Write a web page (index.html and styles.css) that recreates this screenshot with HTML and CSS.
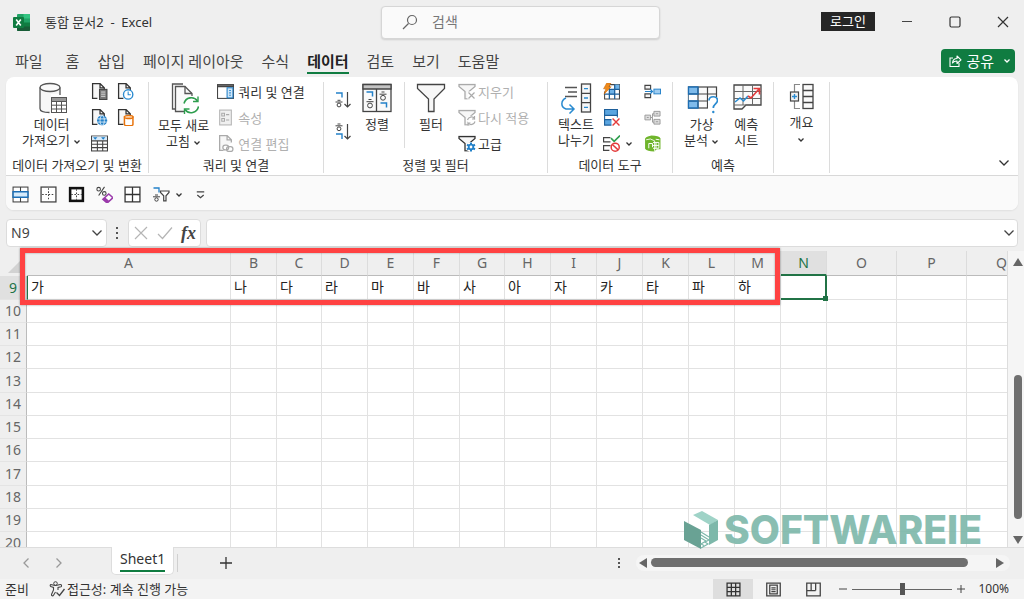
FILE: index.html
```html
<!DOCTYPE html>
<html lang="ko">
<head>
<meta charset="utf-8">
<title>통합 문서2 - Excel</title>
<meta name="viewport" content="width=device-width, initial-scale=1">
<link rel="stylesheet" href="styles.css">
</head>
<body>
<svg class="defs" aria-hidden="true">
  <symbol id="chev" viewBox="0 0 8 6"><path d="M1.500 1.500L4 4l2.500-2.500" fill="none" stroke="currentColor" stroke-width="1.300"/></symbol>
  <symbol id="chev-lg" viewBox="0 0 12 8"><path d="M1.500 1.500L6 6l4.500-4.500" fill="none" stroke="currentColor" stroke-width="1.300"/></symbol>
  <symbol id="page" viewBox="0 0 16 16"><path d="M6 14.500H1.500v-14h7l4 4V7M8.500.5v4h4" fill="#f7f7f7" stroke="currentColor" stroke-width="1.200"/></symbol>
  <symbol id="funnel-sm" viewBox="0 0 18 16"><path d="M1 1h16v2l-6 5v7.500H7V8L1 3z" fill="#f7f7f7" stroke="currentColor" stroke-width="1.300"/></symbol>
</svg>

<header class="titlebar">
  <div class="doc">
    <svg class="app-icon" viewBox="0 0 17 17"><rect x="4" y="0" width="13" height="17" rx="1" fill="#21a366"/><path d="M10.500 0H16a1 1 0 0 1 1 1v3.500h-6.500z" fill="#33c481"/><path d="M4 8.500h6.500V13H4zM10.500 8.500H17V13h-6.500z" fill="#107c41"/><path d="M4 12.500h13V16a1 1 0 0 1-1 1H5a1 1 0 0 1-1-1z" fill="#185c37"/><rect x="0" y="3" width="11" height="11" rx="1" fill="#107c41"/><path d="M3.200 5.500l4.600 6M7.800 5.500l-4.600 6" stroke="#fff" stroke-width="1.600"/></svg>
    <h1 class="doc-title">통합 문서2&nbsp; -&nbsp; Excel</h1>
  </div>
  <label class="search">
    <svg viewBox="0 0 16 16" width="16" height="16"><circle cx="10" cy="6" r="4.500" fill="none" stroke="#666" stroke-width="1.200"/><path d="M6.500 9.500L1 15" stroke="#666" stroke-width="1.300"/></svg>
    <input type="search" placeholder="검색" aria-label="검색">
  </label>
  <div class="window-tools">
    <button class="login">로그인</button>
    <div class="window-buttons">
      <button aria-label="최소화"><svg viewBox="0 0 12 12"><path d="M1 5.500h10" stroke="#444"/></svg></button>
      <button aria-label="최대화"><svg viewBox="0 0 12 12"><rect x="1" y="1" width="10" height="10" rx="1.500" fill="none" stroke="#333" stroke-width="1.200"/></svg></button>
      <button aria-label="닫기"><svg viewBox="0 0 12 12"><path d="M1 1l10 10M11 1L1 11" stroke="#333" stroke-width="1.200"/></svg></button>
    </div>
  </div>
</header>

<nav class="tabs">
  <a href="#" class="file">파일</a><a href="#">홈</a><a href="#">삽입</a><a href="#">페이지 레이아웃</a><a href="#">수식</a><a href="#" class="active">데이터</a><a href="#">검토</a><a href="#">보기</a><a href="#">도움말</a>
  <button class="share">
    <svg viewBox="0 0 14 14" width="14" height="14"><path d="M5 4H2v8.500h9V9" fill="none" stroke="#fff" stroke-width="1.100"/><path d="M4.500 9c.3-3 2-4.500 4.500-4.500V2l4 3.800L9 9.500V7C7 7 5.500 7.500 4.500 9z" fill="none" stroke="#fff" stroke-width="1.100" stroke-linejoin="round"/></svg>
    <span>공유</span>
    <svg class="chev" viewBox="0 0 8 6"><use href="#chev"/></svg>
  </button>
</nav>

<section class="ribbon">
  <div class="groups">
    <section class="group get-data">
      <div class="tools">
        <button class="big">
          <svg viewBox="0 0 30 32" width="30" height="32"><path d="M3 5v22c0 2.500 4.500 4 10 4h1V12h9V5" fill="#f7f7f7"/><ellipse cx="13" cy="5.500" rx="10" ry="4" fill="#fafafa" stroke="#555" stroke-width="1.300"/><path d="M3 5.500v21c0 2.500 4 4 9.500 4M23 5.500V13" fill="none" stroke="#555" stroke-width="1.300"/><rect x="14.500" y="15.500" width="15" height="15" fill="#fff" stroke="#555"/><path d="M14.500 15.500h15v4h-15z" fill="#999" stroke="#555"/><path d="M14.500 23.200h15M14.500 27h15M19.500 19v11.500M24.500 19v11.500" stroke="#555"/></svg>
          <span>데이터<br>가져오기 <svg class="chev" viewBox="0 0 8 6"><use href="#chev"/></svg></span>
        </button>
        <div class="icon-grid">
          <button aria-label="텍스트/CSV"><svg viewBox="0 0 16 16"><use href="#page"/><rect x="8" y="6" width="7" height="9.500" fill="#777" stroke="#444"/><path d="M9.500 8.500h4M9.500 10.500h4M9.500 12.500h4" stroke="#fff" stroke-width=".7"/></svg></button>
          <button aria-label="최근 원본"><svg viewBox="0 0 16 16"><use href="#page"/><circle cx="10.500" cy="10.800" r="4.400" fill="#fff" stroke="#2b8bd0" stroke-width="1.300"/><path d="M10.500 8v3h2.500" fill="none" stroke="#2b8bd0"/></svg></button>
          <button aria-label="웹"><svg viewBox="0 0 16 16"><use href="#page"/><circle cx="10.500" cy="10.800" r="4.800" fill="#2381c9"/><ellipse cx="10.500" cy="10.800" rx="2" ry="4.500" fill="none" stroke="#fff" stroke-width=".7"/><path d="M6 9.300h9M6 12.300h9" stroke="#fff" stroke-width=".7"/></svg></button>
          <button aria-label="기존 연결"><svg viewBox="0 0 16 16"><use href="#page"/><path d="M7 7.500v7c0 .8 1.500 1.300 4 1.300s4-.5 4-1.300v-7z" fill="#fff" stroke="#e8740c" stroke-width="1.400"/><ellipse cx="11" cy="7.500" rx="4" ry="1.500" fill="#fbd2ac" stroke="#e8740c" stroke-width="1.300"/></svg></button>
          <button aria-label="테이블"><svg viewBox="0 0 16 16"><rect x=".5" y="1" width="15" height="14" fill="#fff" stroke="#444"/><path d="M1 1.500h14V5H1z" fill="#d6eafa"/><path d="M.5 5.500h15M.5 8.700h15M.5 11.900h15M6 5v10M11 5v10" stroke="#444"/><path d="M2 2h4L4 4.500zM9.500 2h4l-2 2.500z" fill="#2381c9"/></svg></button>
        </div>
      </div>
      <h2>데이터 가져오기 및 변환</h2>
    </section>

    <section class="group queries">
      <div class="tools">
        <button class="big">
          <svg viewBox="0 0 30 32" width="30" height="32"><path d="M15 27H3.500V2H14" fill="#f7f7f7" stroke="#555" stroke-width="1.300"/><path d="M15 29.500H6.500V4.500H16l7 7V14" fill="#fafafa" stroke="#555" stroke-width="1.300"/><path d="M16 4.500v7h7" fill="none" stroke="#555" stroke-width="1.300"/><circle cx="22" cy="23" r="8" fill="#fff"/><path d="M15 21.500a7.500 7.500 0 0 1 13.500-2.500M29.500 24.500a7.500 7.500 0 0 1-13.500 3" fill="none" stroke="#2f9e4f" stroke-width="1.600"/><path d="M29 14.500v5h-5M15.500 32v-5h5" fill="none" stroke="#2f9e4f" stroke-width="1.400"/></svg>
          <span>모두 새로<br>고침 <svg class="chev" viewBox="0 0 8 6"><use href="#chev"/></svg></span>
        </button>
        <div class="rows">
          <button><svg viewBox="0 0 16 16"><rect x=".5" y="1.500" width="15" height="13" fill="#fff" stroke="#444"/><path d="M.5 2.500h15v1H.5z" fill="#777" stroke="#444"/><rect x="9.500" y="4.500" width="5.500" height="9.500" fill="#cfe6f8" stroke="#2381c9"/><path d="M11.500 7h1.500M11.500 9.300h1.500M11.500 11.500h1.500" stroke="#2381c9"/></svg>쿼리 및 연결</button>
          <button disabled><svg viewBox="0 0 16 16"><rect x="2.500" y="1" width="11" height="14" fill="#f0f0f0" stroke="#b5b5b5"/><path d="M4.500 4h2.500v2.500H4.500zM4.500 9h2.500v2.500H4.500zM8.500 5.300h3M8.500 10.300h3" fill="none" stroke="#aaa"/></svg>속성</button>
          <button disabled><svg viewBox="0 0 16 16" class="dim"><use href="#page" x="1"/><rect x="5" y="9" width="11" height="6" rx="3" fill="#fff"/><rect x="5.500" y="9.500" width="5.500" height="4.500" rx="2.200" fill="none" stroke="#aaa" stroke-width="1.200"/><rect x="9" y="11" width="6" height="4.500" rx="2.200" fill="none" stroke="#aaa" stroke-width="1.200"/></svg>연결 편집</button>
        </div>
      </div>
      <h2>쿼리 및 연결</h2>
    </section>

    <section class="group sort">
      <div class="tools">
        <div class="sort-pair">
          <button aria-label="오름차순 정렬"><svg viewBox="0 0 18 18"><path d="M2 2h6v4.500" fill="none" stroke="#2381c9" stroke-width="1.400"/><path d="M3.500 9.300h3M1.500 11h7" stroke="#444"/><circle cx="5" cy="14" r="1.900" fill="none" stroke="#444"/><path d="M13.500 1v15M10.500 13l3 3 3-3" fill="none" stroke="#444" stroke-width="1.200"/></svg></button>
          <button aria-label="내림차순 정렬"><svg viewBox="0 0 18 18"><path d="M3.500 1h3M1.500 2.800h7" stroke="#444"/><circle cx="5" cy="5.800" r="1.900" fill="none" stroke="#444"/><path d="M2 11h6v5" fill="none" stroke="#2381c9" stroke-width="1.400"/><path d="M13.500 1v15M10.500 13l3 3 3-3" fill="none" stroke="#444" stroke-width="1.200"/></svg></button>
        </div>
        <button class="big">
          <svg viewBox="0 0 30 32" width="30" height="32"><rect x="1" y="2.500" width="28" height="27" fill="#fafafa" stroke="#444" stroke-width="1.300"/><path d="M1 2.500h28V7H1z" fill="#c4c4c4" stroke="#444" stroke-width="1.300"/><path d="M14.500 7v22.500" stroke="#444" stroke-width="1.300"/><path d="M4.500 10h6v4.500M18.500 21h6v4.500" fill="none" stroke="#2381c9" stroke-width="1.500"/><path d="M6.500 17.500h3M4.500 19.700h7M19.500 10h3M17.500 12.200h7" stroke="#444"/><circle cx="8" cy="23.500" r="2.400" fill="none" stroke="#444"/><circle cx="21" cy="15.800" r="2.400" fill="none" stroke="#444"/></svg>
          <span>정렬</span>
        </button>
        <button class="big filter">
          <svg viewBox="0 0 30 32" width="30" height="32"><path d="M1.500 2.500h27v4L18 17v12.500h-5.500V17L1.500 6.500z" fill="#f7f7f7" stroke="#444" stroke-width="1.300"/></svg>
          <span>필터</span>
        </button>
        <div class="rows">
          <button disabled><svg viewBox="0 0 18 16" class="dim wide"><use href="#funnel-sm"/><path d="M9.500 8H18v8H9.500z" fill="#fff"/><path d="M10.500 9l6 6M16.500 9l-6 6" stroke="#aaa" stroke-width="1.200"/></svg>지우기</button>
          <button disabled><svg viewBox="0 0 18 16" class="dim wide"><use href="#funnel-sm"/><circle cx="13" cy="11" r="4.800" fill="#fff"/><path d="M9.500 10.500a4 4 0 0 1 7-1.500V6.500M17 12a4 4 0 0 1-7 1.500V16M16.500 9.500H14M10 13.500h2.500" fill="none" stroke="#aaa" stroke-width="1.200"/></svg>다시 적용</button>
          <button><svg viewBox="0 0 18 16" class="wide"><use href="#funnel-sm"/><circle cx="13" cy="11.500" r="5" fill="#fff"/><path d="M13 7v9M9 9.200l8 4.600M17 9.200l-8 4.600" stroke="#2381c9" stroke-width="2"/><circle cx="13" cy="11.500" r="2.300" fill="#fff" stroke="#2381c9" stroke-width="1.800"/></svg>고급</button>
        </div>
      </div>
      <h2>정렬 및 필터</h2>
    </section>

    <section class="group data-tools">
      <div class="tools">
        <button class="big">
          <svg viewBox="0 0 32 32" width="32" height="32"><path d="M5 5.500h12M8 10h9M5 14.500h12" stroke="#555" stroke-width="1.300"/><path d="M6 16c-5 2-6 9 0 11h7M9.500 22.500l4.500 4.500-4.500 4.500" fill="none" stroke="#2b8bd0" stroke-width="1.500"/><rect x="21.500" y="2" width="9" height="28" fill="#f7f7f7" stroke="#444" stroke-width="1.300"/><path d="M21.500 11.300h9M21.500 20.700h9" stroke="#444" stroke-width="1.300"/><path d="M24 6.700h4M24 16h4M24 25.300h4" stroke="#2b8bd0" stroke-width="1.300"/></svg>
          <span>텍스트<br>나누기</span>
        </button>
        <div class="icon-grid">
          <button aria-label="빠른 채우기"><svg viewBox="0 0 16 16"><path d="M3 1.500h12.500v13.500H1.500V8" fill="#fff" stroke="#444"/><path d="M6 6h5v5H6zM11 1.500h4.500V6H11z" fill="#6fb3e8"/><path d="M1.500 10.500h14M6 6h9.500M6 2v13M11 1.500V15" stroke="#1d5f9a" stroke-width="1.200"/><path d="M3.500 0h4L5.500 3.500h2.200L1 10.500l1.700-5H.5z" fill="#ee8a1c" stroke="#c9660a" stroke-width=".5"/></svg></button>
          <button aria-label="통합"><svg viewBox="0 0 18 16"><path d="M1 1.500h6v4H1zM1 10.500h6v4H1z" fill="#f3f3f3" stroke="#444" stroke-width="1.200"/><path d="M1 8h7M6.500 5.500L9 8l-2.500 2.500" fill="none" stroke="#2381c9" stroke-width="1.300"/><rect x="10.500" y="5.500" width="7" height="5" fill="#9fcdf1" stroke="#2381c9"/></svg></button>
          <button aria-label="중복된 항목 제거"><svg viewBox="0 0 16 16"><path d="M1.500.5h12v14.500h-12z" fill="#fff" stroke="#1d5f9a"/><path d="M1.500.5h12v5.500h-12zM1.500 10h8v5h-8z" fill="#5aa5e0" stroke="#1d5f9a"/><path d="M8 8h8v8H8z" fill="#fff"/><path d="M9 9l6.500 6.500M15.500 9L9 15.500" stroke="#e33b3b" stroke-width="1.300"/></svg></button>
          <button aria-label="관계" disabled><svg viewBox="0 0 18 16"><path d="M6 8h3V4h2M9 8v5h2" fill="none" stroke="#999"/><path d="M1 5.500h6v5H1zM10.500 1.500h6.500v5h-6.500zM10.500 10h6.500v5h-6.500z" fill="#ddd" stroke="#999"/><path d="M3 8h2M12.500 4h2.500M12.500 12.500H15" stroke="#999"/></svg></button>
          <button class="split" aria-label="데이터 유효성 검사"><svg viewBox="0 0 16 16"><path d="M7 2.500H.5v4H7M7 10H.5v4.500H6" fill="none" stroke="#444" stroke-width="1.200"/><path d="M7.500 3l3 3L16 .5" fill="none" stroke="#2f9e4f" stroke-width="1.500"/><circle cx="11.500" cy="11.500" r="3.800" fill="#fff" stroke="#e33b3b" stroke-width="1.400"/><path d="M8.800 9l5.400 5" stroke="#e33b3b" stroke-width="1.400"/></svg><svg class="chev" viewBox="0 0 8 6"><use href="#chev"/></svg></button>
          <button aria-label="데이터 모델"><svg viewBox="0 0 16 16"><path d="M1 3.500Q1 2 7 .5Q14 .5 15.500 3v10.500H12l-2.500 2Q3 15.500 1 13z" fill="#6fb52c"/><path d="M2 4.500q4-2 8 1v9.500" fill="none" stroke="#fff" stroke-width=".8"/><path d="M4.500 12.500V8h3.500v3.500M8.500 7H14v5.500H8.500M11.300 7v5.500M8.500 9.800H14M11 4l3.500.5" fill="none" stroke="#fff" stroke-width=".9"/></svg></button>
        </div>
      </div>
      <h2>데이터 도구</h2>
    </section>

    <section class="group forecast">
      <div class="tools">
        <button class="big">
          <svg viewBox="0 0 32 32" width="32" height="32"><rect x="2.500" y="5" width="28" height="21" fill="#fafafa" stroke="#444" stroke-width="1.200"/><path d="M2.500 5H12v21H2.500z" fill="#7fbbeb"/><path d="M3 12h9v7H3z" fill="#fff"/><path d="M2.500 12h28M2.500 19h28M12 5v21M21.500 5v21" stroke="#444" stroke-width="1.200"/><path d="M2.500 5H12v7H2.500zM2.500 19H12v7H2.500z" fill="none" stroke="#1d6fb5" stroke-width="1.300"/><path d="M22 15h10v17H22z" fill="#fff"/><path d="M23 18.500c0-5 8.500-5 8.500 0 0 3.500-4.200 3.500-4.200 7.500" fill="none" stroke="#2b8bd0" stroke-width="1.700"/><circle cx="27.300" cy="30" r="1.200" fill="#2b8bd0"/></svg>
          <span>가상<br>분석 <svg class="chev" viewBox="0 0 8 6"><use href="#chev"/></svg></span>
        </button>
        <button class="big">
          <svg viewBox="0 0 32 32" width="32" height="32"><path d="M4 3h27v20H16l-4 4H4z" fill="#fafafa" stroke="#444" stroke-width="1.300"/><path d="M4 9.500h27M4 16.500h27M4 23h12M13 3v20M22.500 3v20" stroke="#666"/><path d="M5 20l5-4 3.500 3L18 14" fill="none" stroke="#2b8bd0" stroke-width="1.600"/><path d="M18 14l3 2 8-9M23.500 6.500h6v6" fill="none" stroke="#e33b3b" stroke-width="1.600"/></svg>
          <span>예측<br>시트</span>
        </button>
      </div>
      <h2>예측</h2>
    </section>

    <section class="group outline">
      <div class="tools">
        <button class="big">
          <svg viewBox="0 0 28 32" width="28" height="32"><path d="M12 2.500H6.500v24H12" fill="none" stroke="#888" stroke-width="1.200"/><rect x="15" y="2.500" width="10" height="24" fill="#fafafa" stroke="#444" stroke-width="1.300"/><path d="M15 8.500h10M15 14.500h10M15 20.500h10" stroke="#444" stroke-width="1.300"/><rect x="2.500" y="10" width="8" height="9" fill="#f3f3f3" stroke="#444" stroke-width="1.200"/><path d="M4 14.500h5M6.500 12v5" stroke="#2b8bd0" stroke-width="1.400"/></svg>
          <span>개요<br><svg class="chev" viewBox="0 0 8 6"><use href="#chev"/></svg></span>
        </button>
      </div>
    </section>
    <button class="collapse" aria-label="리본 축소"><svg viewBox="0 0 12 8" width="12" height="8"><use href="#chev-lg"/></svg></button>
  </div>

  <div class="quick">
    <button aria-label="병합"><svg viewBox="0 0 16 16"><rect x="1" y="1" width="14" height="14" fill="#fff" stroke="#444"/><path d="M8 1v14" stroke="#444"/><path d="M1 5.500h14v5H1z" fill="#d5eafa" stroke="#1d6fb5" stroke-width="1.400"/></svg></button>
    <button aria-label="테두리 없음"><svg viewBox="0 0 16 16"><rect x="1" y="1" width="14" height="14" fill="#fff" stroke="#444" stroke-width="1.200"/><path d="M8 2v12M2 8h12" stroke="#444" stroke-dasharray="1.500 1.500"/></svg></button>
    <button aria-label="굵은 테두리"><svg viewBox="0 0 16 16"><rect x="2" y="2" width="12" height="12" fill="#fff" stroke="#111" stroke-width="2.400"/><path d="M8 3v10M3 8h10" stroke="#444" stroke-dasharray="1.500 1.500"/></svg></button>
    <button aria-label="서식 지우기"><svg viewBox="0 0 16 16"><circle cx="2.500" cy="3" r="1.700" fill="none" stroke="#444"/><circle cx="7.800" cy="7" r="1.700" fill="none" stroke="#444"/><path d="M8 .8L2.500 9" stroke="#444"/><path d="M6.500 12.500L12 7.500l4 3.500-5.500 5z" fill="#fff" stroke="#9b3bab" stroke-width="1.500"/><path d="M6.500 12.500l2-2 4 3.500-2 2z" fill="#9b3bab"/></svg></button>
    <button aria-label="모든 테두리"><svg viewBox="0 0 16 16"><path d="M1 1h14v14H1zM8 1v14M1 8h14" fill="#fff" stroke="#333" stroke-width="1.200"/></svg></button>
    <button class="split" aria-label="정렬 및 필터"><svg viewBox="0 0 18 16" class="wide"><path d="M1.500 1.500H7V6" fill="none" stroke="#2381c9" stroke-width="1.300"/><path d="M3 8.500h3M1 10.300h7" stroke="#444"/><circle cx="4.500" cy="13" r="1.700" fill="none" stroke="#444"/><path d="M8.500 4.500H17v1.500l-3 3.300v5h-2.300v-5L8.500 6z" fill="#fff" stroke="#444" stroke-width="1.200"/></svg><svg class="chev" viewBox="0 0 8 6"><use href="#chev"/></svg></button>
    <button aria-label="빠른 실행 도구 모음 사용자 지정"><svg viewBox="0 0 16 16"><path d="M4.500 5.500h7M5 8.500l3 2.500 3-2.500" fill="none" stroke="#444" stroke-width="1.200"/></svg></button>
  </div>
</section>

<section class="formula">
  <label class="namebox"><input type="text" value="N9" aria-label="이름 상자"><svg viewBox="0 0 12 8" width="12" height="8"><use href="#chev-lg"/></svg></label>
  <svg class="dots" viewBox="0 0 4 14" width="4" height="14"><path d="M1 1h2v2H1zM1 6h2v2H1zM1 11h2v2H1z" fill="#555"/></svg>
  <div class="entry">
    <button aria-label="취소"><svg viewBox="0 0 14 14" width="14" height="14"><path d="M1 1l12 12M13 1L1 13" stroke="#b5b5b5" stroke-width="1.200"/></svg></button>
    <button aria-label="입력"><svg viewBox="0 0 16 14" width="16" height="14"><path d="M1 8l4.500 4.500L15 1.500" fill="none" stroke="#b5b5b5" stroke-width="1.200"/></svg></button>
    <button class="fx" aria-label="함수 삽입">fx</button>
  </div>
  <label class="bar"><input type="text" aria-label="수식 입력줄"><svg viewBox="0 0 12 8" width="12" height="8"><use href="#chev-lg"/></svg></label>
</section>

<main class="workspace">
  <div class="sheet">
    <table>
      <colgroup><col class="c-head"><col class="c-a"><col><col class="c-narrow"><col><col><col><col class="c-narrow"><col><col><col><col><col><col><col><col class="c-wide"><col class="c-wide"><col class="c-wide"></colgroup>
      <thead><tr><th class="corner"><svg viewBox="0 0 12 12" width="12" height="12"><path d="M12 0v12H0z" fill="#d2d2d2"/></svg></th><th>A</th><th>B</th><th>C</th><th>D</th><th>E</th><th>F</th><th>G</th><th>H</th><th>I</th><th>J</th><th>K</th><th>L</th><th>M</th><th class="on">N</th><th>O</th><th>P</th><th>Q</th></tr></thead>
      <tbody>
        <tr><th class="on">9</th><td class="first">가</td><td>나</td><td>다</td><td>라</td><td>마</td><td>바</td><td>사</td><td>아</td><td>자</td><td>카</td><td>타</td><td>파</td><td>하</td><td class="cursor"></td><td></td><td></td><td></td></tr>
        <tr><th>10</th><td></td><td></td><td></td><td></td><td></td><td></td><td></td><td></td><td></td><td></td><td></td><td></td><td></td><td></td><td></td><td></td><td></td></tr>
        <tr><th>11</th><td></td><td></td><td></td><td></td><td></td><td></td><td></td><td></td><td></td><td></td><td></td><td></td><td></td><td></td><td></td><td></td><td></td></tr>
        <tr><th>12</th><td></td><td></td><td></td><td></td><td></td><td></td><td></td><td></td><td></td><td></td><td></td><td></td><td></td><td></td><td></td><td></td><td></td></tr>
        <tr><th>13</th><td></td><td></td><td></td><td></td><td></td><td></td><td></td><td></td><td></td><td></td><td></td><td></td><td></td><td></td><td></td><td></td><td></td></tr>
        <tr><th>14</th><td></td><td></td><td></td><td></td><td></td><td></td><td></td><td></td><td></td><td></td><td></td><td></td><td></td><td></td><td></td><td></td><td></td></tr>
        <tr><th>15</th><td></td><td></td><td></td><td></td><td></td><td></td><td></td><td></td><td></td><td></td><td></td><td></td><td></td><td></td><td></td><td></td><td></td></tr>
        <tr><th>16</th><td></td><td></td><td></td><td></td><td></td><td></td><td></td><td></td><td></td><td></td><td></td><td></td><td></td><td></td><td></td><td></td><td></td></tr>
        <tr><th>17</th><td></td><td></td><td></td><td></td><td></td><td></td><td></td><td></td><td></td><td></td><td></td><td></td><td></td><td></td><td></td><td></td><td></td></tr>
        <tr><th>18</th><td></td><td></td><td></td><td></td><td></td><td></td><td></td><td></td><td></td><td></td><td></td><td></td><td></td><td></td><td></td><td></td><td></td></tr>
        <tr><th>19</th><td></td><td></td><td></td><td></td><td></td><td></td><td></td><td></td><td></td><td></td><td></td><td></td><td></td><td></td><td></td><td></td><td></td></tr>
        <tr><th>20</th><td></td><td></td><td></td><td></td><td></td><td></td><td></td><td></td><td></td><td></td><td></td><td></td><td></td><td></td><td></td><td></td><td></td></tr>
      </tbody>
    </table>
  </div>
  <div class="vscroll">
    <svg viewBox="0 0 10 8" width="10" height="8"><path d="M5 0l5 8H0z" fill="#666"/></svg>
    <div class="vtrack"><div class="vthumb"></div></div>
    <svg viewBox="0 0 10 8" width="10" height="8"><path d="M0 0h10L5 8z" fill="#666"/></svg>
  </div>
  <div class="highlight"></div>
  <div class="watermark">
    <svg viewBox="0 0 34 38" width="34" height="38"><path d="M0 10l17 9v19L0 29z" fill="#69a294"/><path d="M9 4l9-4 16 9-8 5z" fill="#9fd3c7"/><path d="M34 9v20l-9 5V14z" fill="#7db8aa"/><path d="M17 21l8 5M17 24l8 5M17 27l5 3-5 3 3 1.500M25 29l-4 2 3 2-7 4" fill="none" stroke="#7db8aa" stroke-width="1.200"/></svg>
    <span>SOFTWAREIE</span>
  </div>
</main>

<footer class="sheetbar">
  <button aria-label="이전 시트"><svg viewBox="0 0 8 12" width="8" height="12"><path d="M6.500 1.500L2 6l4.500 4.500" fill="none" stroke="#999" stroke-width="1.300"/></svg></button>
  <button aria-label="다음 시트"><svg viewBox="0 0 8 12" width="8" height="12"><path d="M1.500 1.500L6 6l-4.500 4.500" fill="none" stroke="#999" stroke-width="1.300"/></svg></button>
  <button class="sheet-tab"><span>Sheet1</span></button>
  <i class="tab-end"></i>
  <button class="add" aria-label="새 시트"><svg viewBox="0 0 12 12" width="12" height="12"><path d="M6 0v12M0 6h12" stroke="#333" stroke-width="1.300"/></svg></button>
  <svg class="grip" viewBox="0 0 4 12" width="4" height="12"><path d="M1 1h2v2H1zM1 5h2v2H1zM1 9h2v2H1z" fill="#555"/></svg>
  <div class="hscroll">
    <svg viewBox="0 0 8 10" width="8" height="10"><path d="M8 0v10L0 5z" fill="#666"/></svg>
    <div class="htrack"><div class="hthumb"></div></div>
    <svg viewBox="0 0 8 10" width="8" height="10"><path d="M0 0v10l8-5z" fill="#666"/></svg>
  </div>
</footer>

<footer class="status">
  <span>준비</span>
  <button class="access"><svg viewBox="0 0 16 16" width="16" height="16"><circle cx="6.500" cy="2.500" r="1.800" fill="none" stroke="#444"/><path d="M1.500 3.500c-.8 1 0 2 1 2.300l2 .7V9L2.500 13.500c-.2 1.300 1.300 1.800 2 .7L6.500 11M1.500 3.500c1 0 2.500 1 5 1s4-1 5-1 1.500 1.800.5 2.200L9 6.500V9" fill="none" stroke="#444" stroke-width="1.100"/><path d="M7.500 11.500l3 3L15.500 8" fill="none" stroke="#444" stroke-width="1.300"/></svg>접근성: 계속 진행 가능</button>
  <div class="views">
    <button class="on" aria-label="기본"><svg viewBox="0 0 14 14"><path d="M1 1h12v12H1zM5 1v12M9 1v12M1 5h12M1 9h12" fill="none" stroke="#333" stroke-width="1.200"/></svg></button>
    <button aria-label="페이지 레이아웃"><svg viewBox="0 0 14 14"><path d="M.7 1h12.600v12H.7zM3.500 3h7v8h-7z" fill="none" stroke="#444" stroke-width="1.200"/><path d="M5 5.500h4M5 7.200h4M5 9h4" stroke="#444"/></svg></button>
    <button aria-label="페이지 나누기 미리 보기"><svg viewBox="0 0 14 14"><path d="M.7 1h12.600v12H.7zM4.800 1v7M9 1v7M1 8h8" fill="none" stroke="#444" stroke-width="1.200"/></svg></button>
  </div>
  <div class="zoom">
    <button aria-label="축소"><svg viewBox="0 0 8 8" width="8" height="8"><path d="M0 4h8" stroke="#444"/></svg></button>
    <input type="range" min="10" max="190" value="100" aria-label="확대/축소">
    <button aria-label="확대"><svg viewBox="0 0 8 8" width="8" height="8"><path d="M0 4h8M4 0v8" stroke="#444"/></svg></button>
    <span>100%</span>
  </div>
</footer>
</body>
</html>
```

FILE: styles.css
```css
* { box-sizing: border-box; }

body {
  margin: 0;
  height: 100vh;
  display: flex;
  flex-direction: column;
  overflow: hidden;
  background: #efefef;
  color: #333;
  font: 13px/16px "Noto Sans", "Noto Sans CJK KR", sans-serif;
}

button, input {
  font: inherit;
  color: inherit;
  background: none;
  border: 0;
  padding: 0;
  margin: 0;
  outline: 0;
}

svg { display: block; flex: none; }
h1, h2 { margin: 0; font-weight: 400; }
a { color: inherit; text-decoration: none; }

.defs { position: absolute; width: 0; height: 0; }
.chev { width: 8px; height: 6px; }

/* Title bar */
.titlebar {
  height: 44px;
  display: grid;
  grid-template-columns: 381fr 279fr 364fr;
  align-items: center;
}

.doc { display: flex; align-items: center; gap: 15px; padding-left: 13px; }
.app-icon { width: 17px; height: 17px; }
.doc-title { font-size: 13px; }

.search {
  height: 33px;
  display: flex;
  align-items: center;
  gap: 14px;
  padding-left: 20px;
  background: #fafafa;
  border: 1px solid #d6d6d6;
  border-radius: 4px;
  box-shadow: 0 1px 2px #0002;
}
.search input { flex: 1; min-width: 0; font-size: 14px; }
.search input::placeholder { color: #777; opacity: 1; }

.window-tools { display: flex; justify-content: flex-end; align-items: center; gap: 26px; padding-right: 15px; }
.login { width: 54px; height: 19px; margin-bottom: 2px; background: #262626; color: #fff; line-height: 18px; }
.window-buttons { display: flex; gap: 36px; }
.window-buttons svg { width: 12px; height: 12px; }

/* Ribbon tabs */
.tabs {
  height: 33px;
  flex: none;
  display: flex;
  align-items: flex-start;
  gap: 18px;
  padding: 5px 9px 0 15px;
  font-size: 15px;
  line-height: 24px;
  color: #444;
}
.tabs a { height: 25px; white-space: nowrap; }
.tabs .file { padding-right: 5px; }
.tabs .active { color: #222; font-weight: 700; border-bottom: 2px solid #107c41; }

.share {
  margin-left: auto;
  height: 24px;
  display: flex;
  align-items: center;
  gap: 4px;
  padding: 0 4px 0 7px;
  border-radius: 4px;
  background: #107c41;
  color: #fff;
}
.share .chev { margin-left: 5px; }

/* Ribbon */
.ribbon {
  flex: none;
  margin: 0 6px;
  border-radius: 8px;
  overflow: hidden;
  background: #fff;
  box-shadow: 0 1px 2px #0001;
}

.groups { display: flex; height: 99px; border-bottom: 1px solid #d8d8d8; }

.group {
  display: flex;
  flex-direction: column;
  justify-content: space-between;
  margin: 5px 0 2px;
  border-right: 1px solid #dcdcdc;
}
.group h2 { font-size: 13px; line-height: 16px; text-align: center; white-space: nowrap; }

.tools { display: flex; align-items: flex-start; }

.big { display: flex; flex-direction: column; align-items: center; gap: 2px; line-height: 16px; white-space: nowrap; }
.big .chev { display: inline-block; vertical-align: middle; }

.icon-grid { display: grid; grid-template-columns: 16px 16px; gap: 9px 10px; padding-top: 1px; }
.icon-grid button { height: 17px; }
.icon-grid svg { width: 17px; height: 17px; }

.rows { display: flex; flex-direction: column; gap: 9px; padding-top: 1px; }
.rows button { display: flex; align-items: center; gap: 4px; height: 17px; white-space: nowrap; }
.rows svg { width: 17px; height: 17px; }
.rows button:disabled { color: #b0b0b0; }
.dim { color: #aaa; }

.get-data { width: 143px; }
.get-data .tools { gap: 10px; padding-left: 16px; }
.queries { width: 175px; }
.queries .tools { gap: 8px; padding-left: 9px; }
.queries .big { gap: 3px; }
.sort { width: 224px; }
.sort .tools { padding-left: 10px; }
.sort .rows { padding-top: 1px; }
.sort .rows button { gap: 2px; }
.sort .rows svg { width: 18px; }
.sort-pair { display: flex; flex-direction: column; gap: 14px; padding: 9px 10px 0 0; }
.sort-pair svg { width: 18px; height: 18px; }
.sort .filter { margin-left: 12px; padding: 0 12px 0 11px; border-left: 1px solid #dcdcdc; height: 66px; }
.data-tools { width: 125px; }
.data-tools .tools { gap: 9px; padding-left: 10px; }
.data-tools .icon-grid { column-gap: 25px; }
.icon-grid .split { width: 32px; }
.split { display: flex; align-items: center; gap: 5px; }
.split svg.chev { width: 8px; height: 6px; }
.forecast { width: 101px; }
.forecast .tools { gap: 11px; padding-left: 11px; }
.outline { width: 56px; }
.outline .tools { justify-content: center; }
.outline .big { gap: 0; }

.collapse { margin: auto 8px 8px auto; }

.quick { display: flex; align-items: center; gap: 11px; height: 34px; padding: 3px 0 0 6px; background: #fafafa; }
.quick svg { width: 17px; height: 17px; }
.quick svg.wide { width: 18px; }
.quick svg.chev { width: 8px; height: 6px; }
.quick .split + button { margin-left: -2px; }

/* Formula bar */
.formula { flex: none; display: flex; align-items: center; margin: 9px 6px 4px; height: 28px; color: #444; }
.namebox, .entry, .bar {
  height: 28px;
  display: flex;
  align-items: center;
  background: #fff;
  border: 1px solid #dcdcdc;
  border-radius: 4px;
}
.namebox { width: 101px; padding: 0 3px 0 4px; }
.namebox input { flex: 1; min-width: 0; font-size: 14px; }
.dots { margin: 0 9px 0 8px; }
.entry { width: 73px; justify-content: space-between; padding: 0 4px 0 5px; }
.fx { font: italic 700 18px/20px "Liberation Serif", serif; }
.bar { flex: 1; margin-left: 5px; padding-right: 2px; }
.bar input { flex: 1; min-width: 0; }

/* Worksheet */
.workspace { flex: 1; min-height: 0; display: flex; position: relative; }
.sheet { flex: 1; min-width: 0; overflow: hidden; }

table { width: 1037px; table-layout: fixed; border-collapse: separate; border-spacing: 0; background: #fff; }
col { width: 46px; }
.c-head { width: 27px; }
.c-a { width: 204px; }
.c-narrow { width: 45px; }
.c-wide { width: 70px; }

th { font-size: 14px; line-height: 20px; font-weight: 400; color: #666; background: #efefef; padding: 0; }
thead th { height: 25px; border-right: 1px solid #dcdcdc; border-bottom: 1px solid #bbb; }
thead th.on { background: #e0e0e0; color: #217346; border-bottom: 2px solid #217346; }
thead .corner { border-color: #efefef; }
.corner svg { margin: 7px 0 0 8px; }
tbody tr { height: 23px; }
tbody tr:nth-child(4n+1) { height: 24px; }
tbody th { border-right: 1px solid #bbb; border-bottom: 1px solid #e4e4e4; text-align: center; }
tbody th.on { background: #e0e0e0; color: #217346; }
td { padding: 0 0 1px 3px; border-right: 1px solid #e2e2e2; border-bottom: 1px solid #e2e2e2; font-size: 14px; line-height: 20px; color: #222; }
td.first { border-left: 1px solid #217346; }
td.cursor { border-right: 2px solid #217346; border-bottom: 2px solid #217346; position: relative; }
td.cursor::after { content: ""; position: absolute; right: -3px; bottom: -3px; width: 5px; height: 5px; background: #217346; }

.vscroll { width: 17px; display: flex; flex-direction: column; align-items: center; padding: 7px 0 3px 3px; background: #f5f5f5; border-left: 1px solid #ddd; }
.vtrack { flex: 1; width: 8px; display: flex; flex-direction: column; justify-content: flex-end; padding-bottom: 17px; }
.vthumb { height: 57%; border-radius: 4px; background: #6f6f6f; }

.highlight { position: absolute; left: 20px; top: -3px; width: 760px; height: 57px; border: 5px solid #ff4242; box-shadow: 0 0 2px #0006, inset 0 0 2px #0006; }

.watermark { position: absolute; right: 42px; bottom: -2px; display: flex; align-items: center; gap: 6px; }
.watermark span { font: 800 39px/38px Inter, sans-serif; color: #7db8aa; opacity: .9; }

/* Sheet tabs */
.sheetbar { flex: none; height: 32px; display: flex; align-items: center; padding: 0 14px 2px 22px; border-top: 1px solid #ddd; }
.sheetbar > button + button { margin-left: 25px; }
.sheetbar > .sheet-tab { align-self: flex-start; margin: -1px 0 0 48px; width: 63px; height: 28px; padding: 0 8px 2px; background: #fff; border: 1px solid #ddd; border-top: 0; border-radius: 0 0 5px 5px; font-size: 14px; line-height: 23px; }
.sheet-tab span { display: block; border-bottom: 2px solid #107c41; }
.tab-end { width: 1px; height: 18px; margin: 0 42px 0 3px; background: #d0d0d0; }
.grip { margin-left: auto; margin-right: 15px; }
.hscroll { width: 374px; height: 16px; display: flex; align-items: center; gap: 4px; padding: 0 6px 0 3px; background: #f5f5f5; border-radius: 8px; }
.htrack { flex: 1; }
.hthumb { width: 93%; height: 9px; border-radius: 5px; background: #6f6f6f; }

/* Status bar */
.status { flex: none; height: 20px; display: flex; align-items: center; padding: 0 15px 0 5px; background: #f3f3f3; white-space: nowrap; }
.access { display: flex; align-items: center; gap: 2px; margin-left: 20px; }
.views { display: flex; margin-left: auto; }
.views button { width: 40px; height: 20px; display: flex; justify-content: center; align-items: center; }
.views .on { background: #dedede; }
.views svg { width: 15px; height: 15px; }
.zoom { display: flex; align-items: center; gap: 5px; margin-left: 6px; font-size: 12px; }
.zoom span { margin-left: 8px; }
.zoom input { appearance: none; width: 100px; height: 12px; background: linear-gradient(#666, #666) center / 100% 1px no-repeat; }
.zoom input::-webkit-slider-thumb { appearance: none; width: 5px; height: 12px; background: #555; }
```
